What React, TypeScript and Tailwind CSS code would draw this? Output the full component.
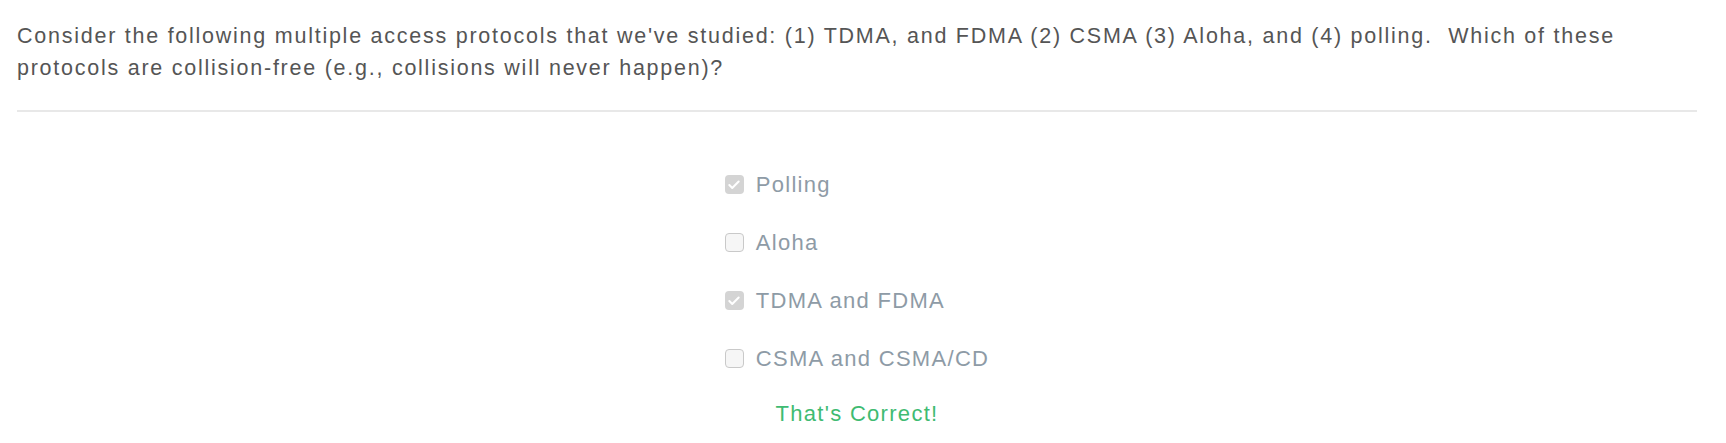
import { Check } from "lucide-react";

const options = [
  { label: "Polling", checked: true },
  { label: "Aloha", checked: false },
  { label: "TDMA and FDMA", checked: true },
  { label: "CSMA and CSMA/CD", checked: false },
];

function Box({ checked }: { checked: boolean }) {
  return checked ? (
    <span className="grid h-[19px] w-[19px] shrink-0 place-items-center rounded-[4px] bg-[#d4d4d4]">
      <Check size={14} strokeWidth={3.5} className="text-white" />
    </span>
  ) : (
    <span className="h-[19px] w-[19px] shrink-0 rounded-[4px] border border-[#c9c9c9] bg-[#f6f6f6]" />
  );
}

export default function App() {
  return (
    <div className="min-h-[443px] bg-white font-['Liberation_Sans',Arial,sans-serif]">
      <div className="ml-[17px] mr-[29px] pt-[20px]">
        <p className="text-[21.5px] leading-[32px] tracking-[1.75px] text-[#555]">
          Consider the following multiple access protocols that we've studied: (1) TDMA, and FDMA (2) CSMA (3) Aloha, and (4) polling.&nbsp; Which of these protocols are collision-free (e.g., collisions will never happen)?
        </p>
        <hr className="mt-[26px] border-t-2 border-[#e8e8e8]" />

        <div className="flex flex-col items-center pt-[56px]">
          <div className="flex flex-col gap-[25px]">
            {options.map((o) => (
              <label key={o.label} className="flex h-[33px] items-center gap-[12px]">
                <Box checked={o.checked} />
                <span className="text-[22px] tracking-[1.3px] text-[#8e9ba6]">{o.label}</span>
              </label>
            ))}
          </div>
          <div className="mt-[22px] text-[22px] tracking-[1.3px] text-[#3fbb72]">That's Correct!</div>
        </div>
      </div>
    </div>
  );
}
